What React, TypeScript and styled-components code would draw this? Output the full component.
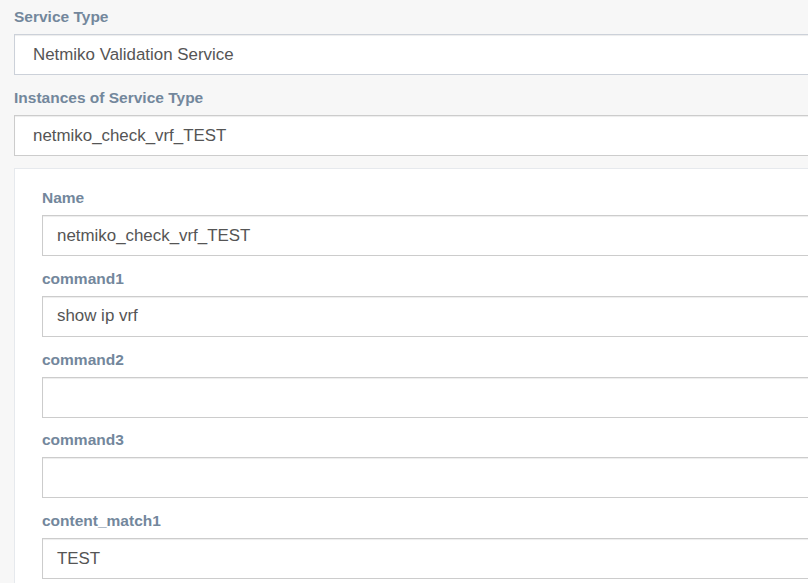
import React from "react";
import styled, { createGlobalStyle } from "styled-components";

const GlobalStyle = createGlobalStyle`
  html, body {
    margin: 0;
    padding: 0;
    background: #f7f7f7;
    overflow: hidden;
  }
  body {
    font-family: "Liberation Sans", Arial, Helvetica, sans-serif;
  }
`;

const Page = styled.div`
  width: 860px;
  padding: 7px 0 0 14px;
  display: flex;
  flex-direction: column;
  gap: 13px;
`;

const Field = styled.div`
  display: flex;
  flex-direction: column;
  gap: 7px;
`;

const Label = styled.label`
  display: block;
  font-size: 15.5px;
  line-height: 20px;
  font-weight: 700;
  color: #73879c;
`;

const Control = styled.div<{ $accent?: boolean; $pad?: number }>`
  box-sizing: border-box;
  height: 41px;
  display: flex;
  align-items: center;
  padding-left: ${(p) => p.$pad ?? 14}px;
  background: #fff;
  border: 1px solid ${(p) => (p.$accent ? "#ccd1d9" : "#cccccc")};
  box-shadow: inset 0 1px 1px rgba(0, 0, 0, 0.075);
  font-size: 16.9px;
  color: #555555;
  white-space: pre;
`;

const Panel = styled.div`
  margin-top: -1px;
  background: #fff;
  border: 1px solid #e6e9ed;
  padding: 19px 0 40px 27px;
  display: flex;
  flex-direction: column;
  gap: 12.75px;
`;

type F = { label: string; value: string };

const fields: F[] = [
  { label: "Name", value: "netmiko_check_vrf_TEST" },
  { label: "command1", value: "show ip vrf" },
  { label: "command2", value: "" },
  { label: "command3", value: "" },
  { label: "content_match1", value: "TEST" },
];

export default function App() {
  return (
    <>
      <GlobalStyle />
      <Page>
        <Field>
          <Label>Service Type</Label>
          <Control $accent $pad={18}>Netmiko Validation Service</Control>
        </Field>
        <Field>
          <Label>Instances of Service Type</Label>
          <Control $pad={18}>netmiko_check_vrf_TEST</Control>
        </Field>
        <Panel>
          {fields.map((f) => (
            <Field key={f.label}>
              <Label>{f.label}</Label>
              <Control>{f.value}</Control>
            </Field>
          ))}
        </Panel>
      </Page>
    </>
  );
}
